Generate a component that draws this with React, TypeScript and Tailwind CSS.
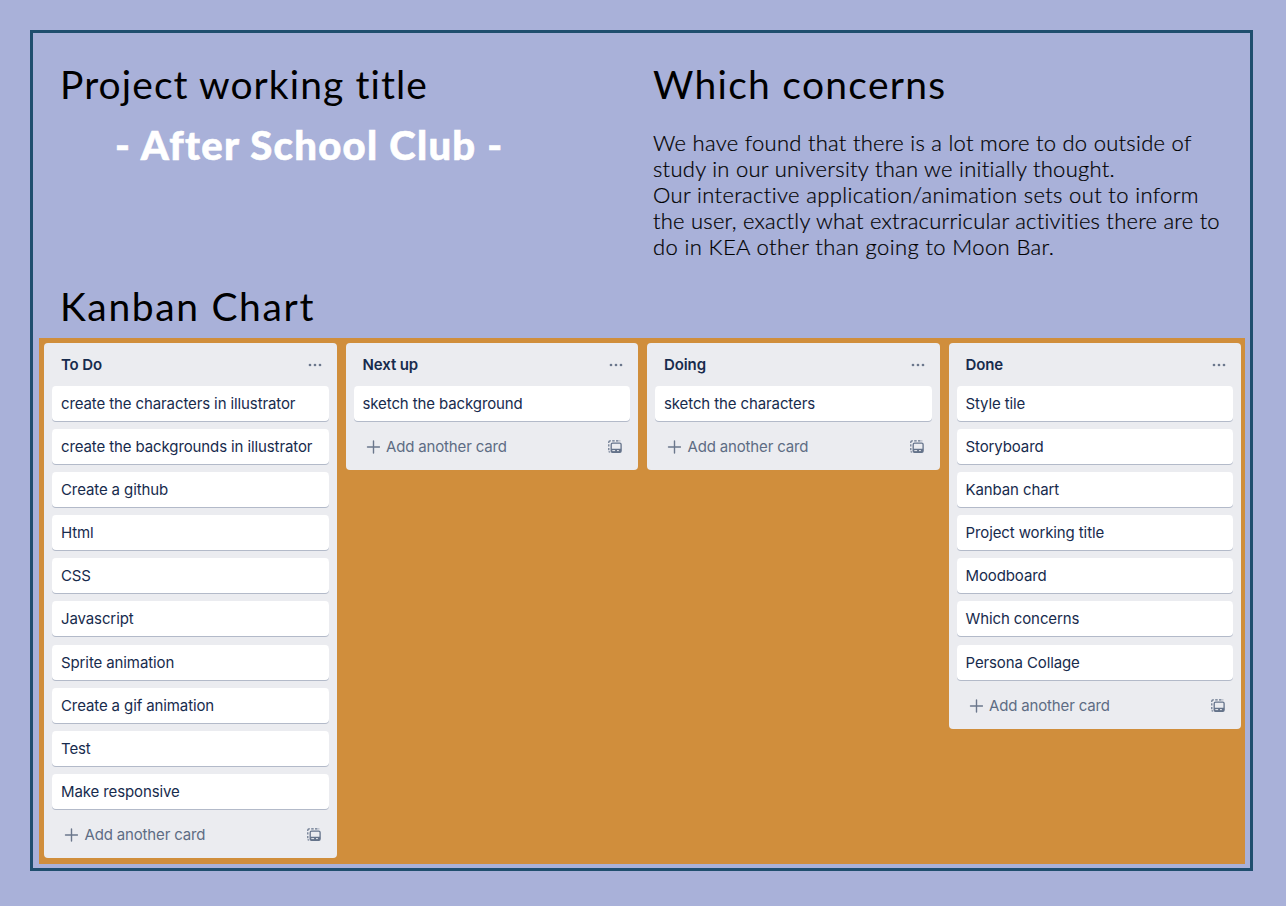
const lists = [
  {
    title: "To Do",
    cards: [
      "create the characters in illustrator",
      "create the backgrounds in illustrator",
      "Create a github",
      "Html",
      "CSS",
      "Javascript",
      "Sprite animation",
      "Create a gif animation",
      "Test",
      "Make responsive",
    ],
  },
  { title: "Next up", cards: ["sketch the background"] },
  { title: "Doing", cards: ["sketch the characters"] },
  {
    title: "Done",
    cards: [
      "Style tile",
      "Storyboard",
      "Kanban chart",
      "Project working title",
      "Moodboard",
      "Which concerns",
      "Persona Collage",
    ],
  },
];

const concerns = [
  { text: "We have found that there is a lot more to do outside of", spacing: "tracking-[0.27px]" },
  { text: "study in our university than we initially thought.", spacing: "tracking-[0.27px]" },
  { text: "Our interactive application/animation sets out to inform", spacing: "tracking-[0.35px]" },
  { text: "the user, exactly what extracurricular activities there are to", spacing: "tracking-[0.23px]" },
  { text: "do in KEA other than going to Moon Bar.", spacing: "tracking-[0.38px]" },
];

function MoreIcon() {
  return (
    <svg className="h-[4px] w-[14px]" viewBox="0 0 14 4" fill="#6b778c">
      <circle cx="2" cy="2" r="1.35" />
      <circle cx="7" cy="2" r="1.35" />
      <circle cx="12" cy="2" r="1.35" />
    </svg>
  );
}

function PlusIcon() {
  return (
    <svg className="h-[14px] w-[14px]" viewBox="0 0 14 14" stroke="#6b778c" strokeWidth="1.4" strokeLinecap="round">
      <path d="M7.5 1v12M1.5 7h12" />
    </svg>
  );
}

function TemplateIcon() {
  return (
    <svg className="h-[14px] w-[14px]" viewBox="0 0 14 14" fill="none" stroke="#65738a">
      <path
        d="M.8 2.9V2Q.8.8 2 .8h.8M4.2.8h2.5M8 .8h2.5M11.6.8h.6M.8 4.2v2.4M.8 7.9v2.3M.9 11.3Q1 12 2.2 12"
        strokeWidth="1.2"
      />
      <rect x="3.2" y="3.1" width="9.9" height="9.2" rx="1.3" strokeWidth="1.3" />
      <path d="M3.2 8.7h9.9v2.5q0 1.1-1 1.1H4.3q-1.1 0-1.1-1.1z" fill="#65738a" stroke="none" />
      <path d="M4.3 10.6h2.8M9 10.6h1.9" stroke="#ebecf0" strokeWidth="1" />
    </svg>
  );
}

function List({ title, cards }: { title: string; cards: string[] }) {
  return (
    <section className="w-[292.5px] shrink-0 rounded-[4px] bg-[#ebecf0] px-2 pb-[6px]">
      <header className="flex h-[43px] items-center justify-between pr-[7px] pl-[9px]">
        <h2 className="font-semibold">{title}</h2>
        <MoreIcon />
      </header>
      <ul className="flex flex-col gap-[8.1px]">
        {cards.map((card) => (
          <li
            key={card}
            className="flex h-[35px] items-center rounded-[4px] bg-white pt-px pl-[9px] shadow-[0_1px_0_#b3bac9]"
          >
            {card}
          </li>
        ))}
      </ul>
      <footer className="mt-2 flex h-[35px] items-center justify-between pt-px pr-[8px] pl-3 text-[#5e6c84]">
        <span className="flex items-center gap-[6.5px] tracking-[-0.16px]">
          <PlusIcon />
          Add another card
        </span>
        <TemplateIcon />
      </footer>
    </section>
  );
}

export default function App() {
  return (
    <div className="h-[906px] w-[1286px] bg-[#a9b1d9] p-[30px] font-['Lato',sans-serif] text-black">
      <main className="flex h-[841px] w-[1223px] flex-col border-[3px] border-[#1f4e6e] px-[6px]">
        <div className="flex h-[250px] shrink-0 pl-[21px]">
          <section className="w-[593px] pt-[26px]">
            <h1 className="text-[39px] leading-[50px] tracking-[1.08px]">Project working title</h1>
            <p className="mt-[11px] pl-[55px] text-[40px] leading-[50px] font-black tracking-[1.3px] text-white [-webkit-text-stroke:0.6px_white]">
              - After School Club -
            </p>
          </section>
          <section className="pt-[26px]">
            <h1 className="text-[39px] leading-[50px] tracking-[1.28px]">Which concerns</h1>
            <div className="mt-[21px] text-[22px] leading-[26px] font-light whitespace-nowrap [-webkit-text-stroke:0.2px_black]">
              {concerns.map(({ text, spacing }) => (
                <p key={text} className={spacing}>
                  {text}
                </p>
              ))}
            </div>
          </section>
        </div>
        <h1 className="h-[55px] shrink-0 pl-[21px] text-[39px] leading-[46px] tracking-[1.65px]">Kanban Chart</h1>
        <div className="flex h-[526px] w-[1206px] items-start gap-[9px] bg-[#d08e3c] pt-[5px] pl-[5px] font-['Inter',sans-serif] text-[15px] leading-5 tracking-[-0.11px] text-[#172b4d]">
          {lists.map((list) => (
            <List key={list.title} {...list} />
          ))}
        </div>
      </main>
    </div>
  );
}
